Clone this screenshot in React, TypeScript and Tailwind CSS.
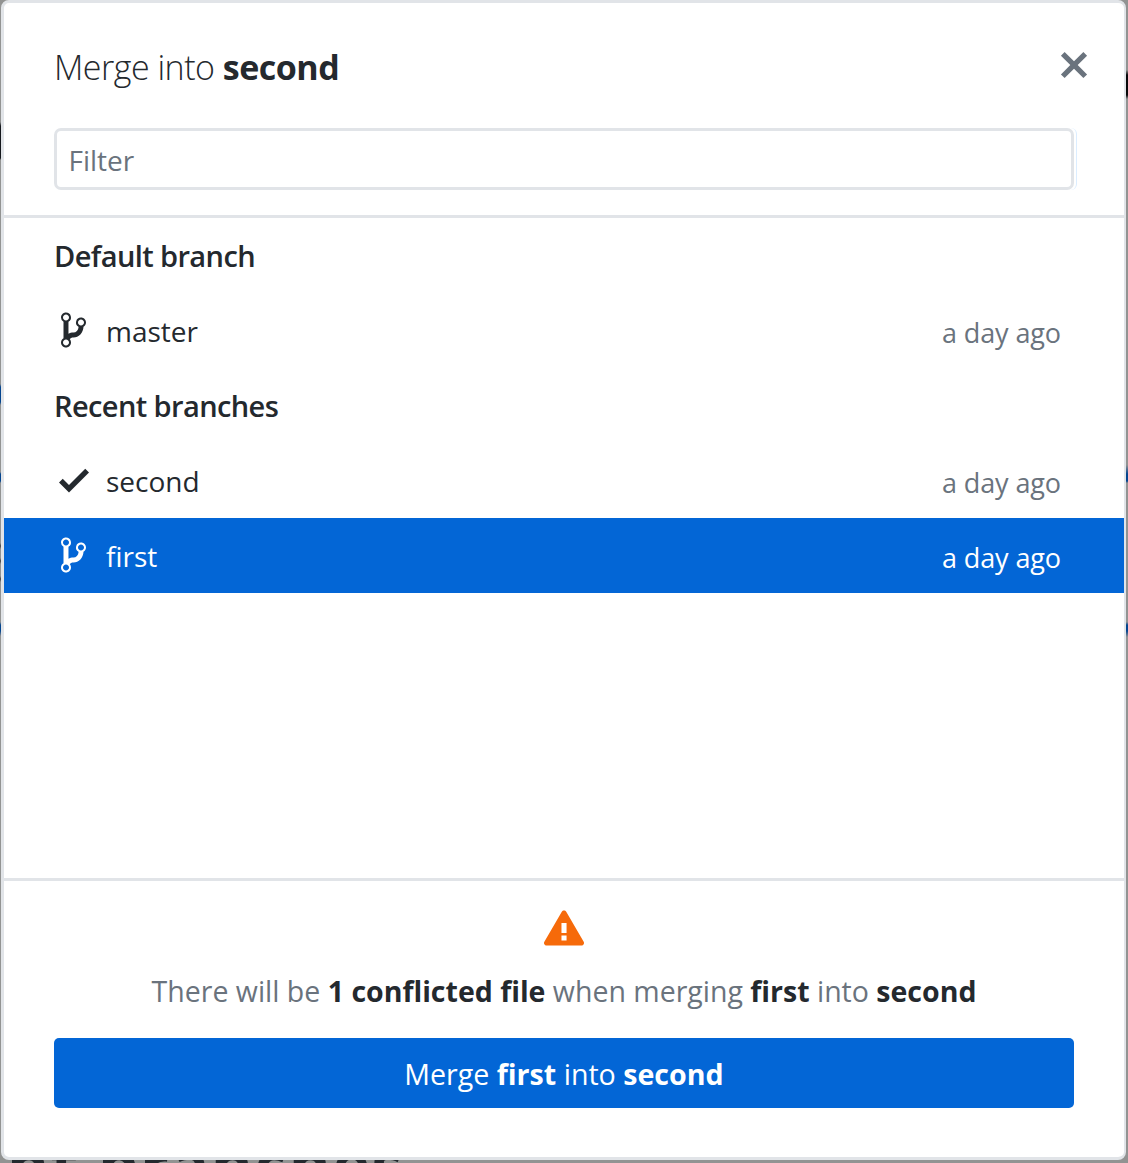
import React from "react";

const branchPath =
  "M10 5c0-1.11-.89-2-2-2a1.993 1.993 0 0 0-1 3.72v.3c-.02.52-.23.98-.63 1.38-.4.4-.86.61-1.38.63-.83.02-1.48.16-2 .45V4.72a1.993 1.993 0 0 0-1-3.72C.88 1 0 1.89 0 3a2 2 0 0 0 1 1.72v6.56c-.59.35-1 .99-1 1.72 0 1.11.89 2 2 2 1.11 0 2-.89 2-2 0-.53-.2-1-.53-1.36.09-.06.48-.41.59-.47.25-.11.56-.17.94-.17 1.05-.05 1.95-.45 2.75-1.25S8.95 7.77 9 6.73h-.02C9.59 6.37 10 5.73 10 5zM2 1.8c.66 0 1.2.55 1.2 1.2 0 .65-.55 1.2-1.2 1.2C1.35 4.2.8 3.65.8 3c0-.65.55-1.2 1.2-1.2zm0 12.41c-.66 0-1.2-.55-1.2-1.2 0-.65.55-1.2 1.2-1.2.65 0 1.2.55 1.2 1.2 0 .65-.55 1.2-1.2 1.2zm6-8c-.66 0-1.2-.55-1.2-1.2 0-.65.55-1.2 1.2-1.2.65 0 1.2.55 1.2 1.2 0 .65-.55 1.2-1.2 1.2z";
const checkPath = "M12 5l-8 8-4-4 1.5-1.5L4 10l6.5-6.5L12 5z";
const closePath =
  "M7.48 8l3.75 3.75-1.48 1.48L6 9.48l-3.75 3.75-1.48-1.48L4.52 8 .77 4.25l1.48-1.48L6 6.52l3.75-3.75 1.48 1.48L7.48 8z";
const alertPath =
  "M8.893 1.5c-.183-.31-.52-.5-.887-.5s-.703.19-.886.5L.138 13.499a.98.98 0 0 0 0 1.001c.193.31.53.501.886.501h13.964c.367 0 .704-.19.877-.5a1.03 1.03 0 0 0 .01-1.002L8.893 1.5zm.133 11.497H6.987v-2.003h2.039v2.003zm0-3.004H6.987V5.987h2.039v4.006z";

function Icon({ path, units, className = "" }: { path: string; units: number; className?: string }) {
  return (
    <svg
      viewBox={`0 0 ${units} 16`}
      width={units * 2.5}
      height={40}
      className={`shrink-0 fill-current ${className}`}
      aria-hidden="true"
    >
      <path fillRule="evenodd" d={path} />
    </svg>
  );
}

function GroupHeading({ children }: { children: React.ReactNode }) {
  return (
    <h2 className="flex h-[75px] items-center pl-[50px] text-[29px] font-semibold tracking-[-0.6px]">
      <span>{children}</span>
    </h2>
  );
}

function BranchRow({ name, current = false, selected = false }: { name: string; current?: boolean; selected?: boolean }) {
  return (
    <li
      className={`flex h-[75px] items-center pr-[63px] pl-[50px] ${selected ? "bg-[#0366d6] text-white" : ""}`}
    >
      <span className="mr-[13px] flex w-[39px] justify-center pb-[2px]">
        <Icon path={current ? checkPath : branchPath} units={current ? 12 : 10} />
      </span>
      <span className="flex-1 text-[28px]">{name}</span>
      <time className={`pt-[5px] text-[27px] tracking-[-0.1px] ${selected ? "" : "text-[#6a737d]"}`}>a day ago</time>
    </li>
  );
}

export default function App() {
  return (
    <div className="flex h-[1163px] w-[1128px] flex-col overflow-hidden bg-[#929392] font-['Open_Sans',sans-serif] text-[#24292e]">
      <div className="flex h-[1160px] shrink-0">
        <div className="w-px bg-[linear-gradient(to_bottom,transparent_122px,#15181c_126px,#15181c_158px,transparent_160px,transparent_384px,#04458f_387px,#04458f_402px,transparent_405px,transparent_472px,#04458f_474px,#04458f_481px,transparent_483px,transparent_543px,#444_546px,transparent_549px,transparent_558px,#444_561px,transparent_564px,transparent_576px,#444_579px,transparent_582px,transparent_622px,#04458f_625px,#04458f_631px,transparent_636px)]" />
        <section
          role="dialog"
          className="flex w-[1125px] flex-col rounded-[8px] border-[3px] border-r-2 border-[#e1e4e8] bg-white"
        >
          <header className="h-[215px] shrink-0 border-b-[3px] border-[#e1e4e8] pl-[50px]">
            <div className="flex h-[125px] items-center justify-between pr-[35px]">
              <h1 className="pt-[3px] text-[34px] font-light tracking-[-0.5px]">
                Merge into <strong className="font-bold">second</strong>
              </h1>
              <button aria-label="Close" className="pb-[2px] text-[#6a737d]">
                <Icon path={closePath} units={12} />
              </button>
            </div>
            <div className="mr-[47px] flex rounded-[6px] border-r border-[#dbedff]">
              <input
                placeholder="Filter"
                className="mr-[2px] h-[62px] w-[1020px] rounded-[7px] border-[3px] border-[#e1e4e8] px-[11.5px] pt-[2px] text-[28px] outline-none placeholder:text-[#6a737d]"
              />
            </div>
          </header>
          <main className="flex-1">
            <GroupHeading>Default branch</GroupHeading>
            <ul>
              <BranchRow name="master" />
            </ul>
            <GroupHeading>Recent branches</GroupHeading>
            <ul>
              <BranchRow name="second" current />
              <BranchRow name="first" selected />
            </ul>
          </main>
          <footer className="flex h-[279px] shrink-0 flex-col border-t-[3px] border-[#e1e4e8] px-[50px] pt-[27px]">
            <Icon path={alertPath} units={16} className="self-center text-[#f66a0a]" />
            <p className="mt-[22px] h-[42px] text-center text-[28.5px] leading-[42px] whitespace-nowrap text-[#6a737d]">
              There will be <strong className="text-[#24292e]">1 conflicted file</strong> when merging{" "}
              <strong className="text-[#24292e]">first</strong> into <strong className="text-[#24292e]">second</strong>
            </p>
            <button className="mt-[26px] h-[70px] w-[1020px] shrink-0 rounded-[5px] bg-[#0366d6] pt-[2px] text-[28.6px] text-white">
              Merge <strong>first</strong> into <strong>second</strong>
            </button>
          </footer>
        </section>
        <div className="w-[2px] bg-[linear-gradient(to_bottom,transparent_70px,#08090a_75px,#08090a_95px,transparent_99px,transparent_465px,#04458f_474px,#04458f_481px,transparent_483px,transparent_622px,#04458f_625px,#04458f_631px,transparent_637px)]" />
      </div>
      <div className="h-[3px] shrink-0 overflow-hidden" aria-hidden="true">
        <p className="-mt-[28px] ml-[7px] text-[64px] leading-[64px] font-bold tracking-[1.5px] whitespace-nowrap">
          nt branches
        </p>
      </div>
    </div>
  );
}
